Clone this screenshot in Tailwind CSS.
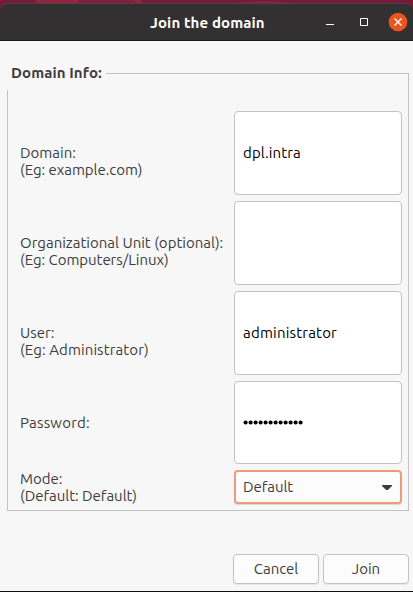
<!DOCTYPE html>
<html lang="en">
<head>
<meta charset="utf-8">
<title>Join the domain</title>
<script src="https://cdn.jsdelivr.net/npm/@tailwindcss/browser@4"></script>
</head>
<body class="w-[413px] h-[592px] overflow-hidden bg-[#160b19] font-['Ubuntu','Noto_Sans',sans-serif] text-[15px] leading-[17px] text-[#3d3d3d] whitespace-nowrap">
<div class="relative h-[591px] flex flex-col bg-[#7a1838]">
  <svg class="absolute left-0 top-0 w-[413px] h-[12px]" viewBox="0 0 413 12"><path d="M36 0h42v12H36zM133 0h7l5 4h-8z" fill="#96233f"/><path d="M78 0h55l4 4H78z" fill="#861c3c"/><path d="M228 4q38-6 70 0z" fill="#8c1f3e"/></svg>
  <header class="relative mt-[3px] h-[38px] shrink-0 flex items-start rounded-t-[7px] border-t border-t-[#484544] border-b border-b-[#1c1b1b] bg-[#323030] text-white">
    <h1 class="ml-[150px] mt-[10px] w-[174px] font-bold tracking-[0.13px]">Join the domain</h1>
    <div class="mt-[8px] flex items-center">
      <svg class="w-[20px] h-[20px]" viewBox="0 0 20 20"><path d="M2 12.5h8" stroke="#fff"/></svg>
      <svg class="ml-[14px] w-[20px] h-[20px]" viewBox="0 0 20 20"><path d="M2.5 6.5h7v7h-7z" fill="none" stroke="#fff"/></svg>
      <svg class="ml-[10px] w-[20px] h-[20px]" viewBox="0 0 20 20"><circle cx="10" cy="10" r="9.3" fill="#e95420"/><path d="M6.5 6.5l7 7M13.5 6.5l-7 7" stroke="#fff" stroke-width="1.4"/></svg>
    </div>
  </header>
  <main class="grow bg-[#f7f7f7] pl-[7px] pr-[4px]">
    <div class="pt-[23px] flex h-[49px]">
      <h2 class="w-[99px] pl-[4px] font-bold tracking-[0.1px]">Domain Info:</h2>
      <div class="grow mt-[9px] h-[17px] border-t border-r border-[#c2c2c2]"></div>
    </div>
    <section class="h-[421px] border-x border-b border-[#c2c2c2] pt-[21px] pl-[12px] pr-[6px] grid grid-cols-[214px_168px] auto-rows-min gap-y-[6px]">
      <div class="pt-[33px]"><p>Domain:</p><p class="tracking-[-0.04px]">(Eg: example.com)</p></div>
      <div class="h-[84px] rounded-[4px] border border-[#c2c2c2] bg-white pl-[8px] pt-[32px] text-black tracking-[0.12px]">dpl.intra</div>
      <div class="pt-[33px]"><p>Organizational Unit (optional):</p><p class="tracking-[-0.04px]">(Eg: Computers/Linux)</p></div>
      <div class="h-[84px] rounded-[4px] border border-[#c2c2c2] bg-white"></div>
      <div class="pt-[33px]"><p>User:</p><p class="tracking-[0.1px]">(Eg: Administrator)</p></div>
      <div class="h-[84px] rounded-[4px] border border-[#c2c2c2] bg-white pl-[8px] pt-[32px] text-black tracking-[0.2px]">administrator</div>
      <div class="pt-[33px]"><p class="tracking-[0.2px]">Password:</p></div>
      <div class="h-[83px] rounded-[4px] border border-[#c2c2c2] bg-white pl-[8px] pt-[38px]">
        <svg class="w-[62px] h-[5px]" viewBox="0 0 62 5"><path d="M2.6 2.5h55.1" stroke="#000" stroke-width="4.2" stroke-linecap="round" stroke-dasharray="0 5"/></svg>
      </div>
      <div><p>Mode:</p><p class="tracking-[-0.05px]">(Default: Default)</p></div>
      <div class="h-[34px] rounded-[4px] border-2 border-[#ec9b7d] bg-[#fcfcfc] shadow-[0_1px_1px_#0002] pl-[7px] pr-[8px] pt-[6px] flex justify-between"><span class="tracking-[-0.08px]">Default</span>
        <svg class="mt-[7px] w-[10px] h-[5px]" viewBox="0 0 10 5"><path d="M0 0h10v1L5.8 5H4.2L0 1z" fill="#3d3d3d"/></svg>
      </div>
    </section>
    <div class="mt-[43px] flex justify-end gap-[4px] text-center">
      <button class="w-[86px] h-[30px] pb-[2px] rounded-[4px] border border-[#c4c4c4] bg-[#fcfcfc] shadow-[0_1px_1px_#0001] tracking-[-0.05px]">Cancel</button>
      <button class="w-[86px] h-[30px] pb-[2px] rounded-[4px] border border-[#c4c4c4] bg-[#fcfcfc] shadow-[0_1px_1px_#0001]">Join</button>
    </div>
  </main>
</div>
</body>
</html>
